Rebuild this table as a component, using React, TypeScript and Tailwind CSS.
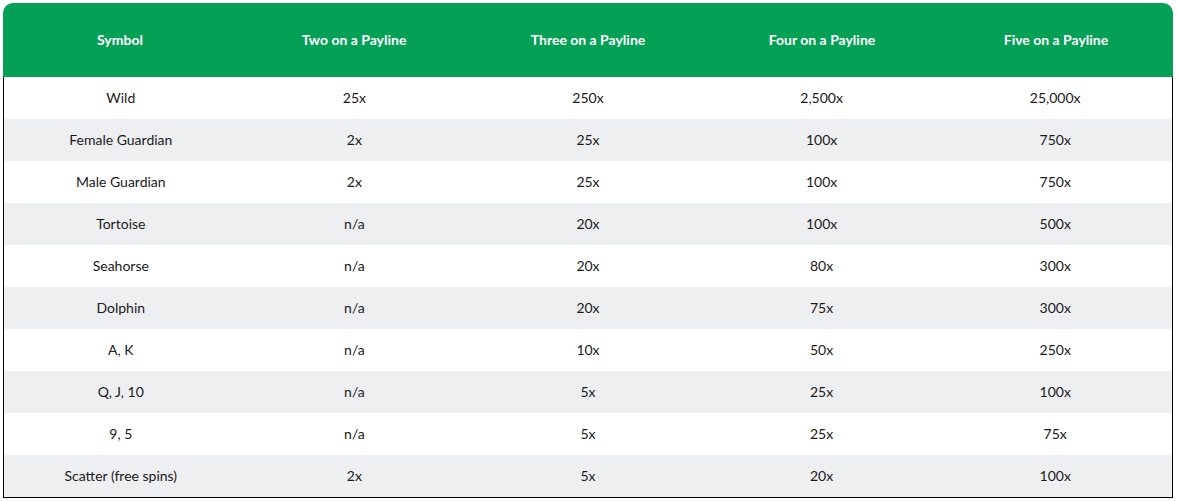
import React from "react";

const headers = ["Symbol", "Two on a Payline", "Three on a Payline", "Four on a Payline", "Five on a Payline"];
const rows: string[][] = [
  ["Wild", "25x", "250x", "2,500x", "25,000x"],
  ["Female Guardian", "2x", "25x", "100x", "750x"],
  ["Male Guardian", "2x", "25x", "100x", "750x"],
  ["Tortoise", "n/a", "20x", "100x", "500x"],
  ["Seahorse", "n/a", "20x", "80x", "300x"],
  ["Dolphin", "n/a", "20x", "75x", "300x"],
  ["A, K", "n/a", "10x", "50x", "250x"],
  ["Q, J, 10", "n/a", "5x", "25x", "100x"],
  ["9, 5", "n/a", "5x", "25x", "75x"],
  ["Scatter (free spins)", "2x", "5x", "20x", "100x"],
];

export default function App() {
  return (
    <div className="w-[1177px] h-[501px] bg-white pt-[3px] pl-[3px]" style={{ fontFamily: "Lato, 'Noto Sans', sans-serif" }}>
      <div className="w-[1170px] rounded-t-[10px] overflow-hidden">
        <div className="grid grid-cols-5 h-[74px] bg-[#03a055] items-center pb-[2px]">
          {headers.map((h) => (
            <div key={h} className="text-center text-white font-bold text-[14px]">{h}</div>
          ))}
        </div>
        <div className="border-x border-b border-black">
          {rows.map((r, i) => (
            <div key={i} className={`grid grid-cols-5 h-[42px] items-center pb-[2px] ${i % 2 === 1 ? "bg-[#eeeff1]" : "bg-white"}`}>
              {r.map((c, j) => (
                <div key={j} className="text-center text-[14px] text-[#1a1a1a]">{c}</div>
              ))}
            </div>
          ))}
        </div>
      </div>
    </div>
  );
}
